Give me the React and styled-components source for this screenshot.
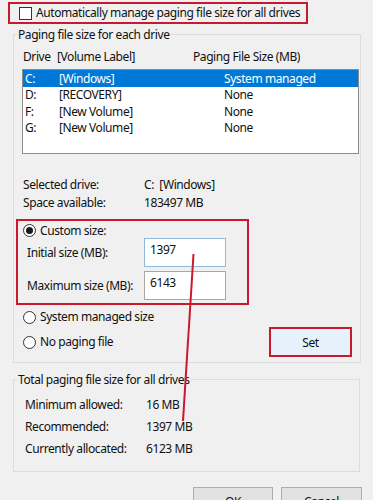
import styled, { createGlobalStyle } from 'styled-components';

const GlobalStyle = createGlobalStyle`
  html, body {
    margin: 0;
    padding: 0;
    background: #f0f0f0;
  }
  body {
    font-family: 'Noto Sans', 'Open Sans', sans-serif;
    font-size: 12px;
    letter-spacing: -0.42px;
    color: #111;
  }
`;

const RED = '#c8192e';

const Dialog = styled.div`
  position: relative;
  width: 373px;
  height: 500px;
  overflow: hidden;
  padding-top: 2px;
  box-sizing: border-box;
`;

const AutoBox = styled.label`
  display: flex;
  align-items: center;
  gap: 4px;
  box-sizing: border-box;
  width: 300px;
  height: 22px;
  margin-left: 8px;
  padding-left: 9px;
  border: 2px solid ${RED};
  line-height: 16px;
  white-space: nowrap;
`;

const Checkbox = styled.span`
  width: 13px;
  height: 13px;
  box-sizing: border-box;
  border: 1px solid #333;
  background: #fff;
  flex: none;
`;

const Group = styled.fieldset`
  box-sizing: border-box;
  min-width: 0;
  width: ${p => p.$width}px;
  margin: ${p => p.$top}px 0 0 13px;
  padding: 6px 0 ${p => p.$bottom}px 0;
  border: 1px solid #dcdcdc;
`;

const Legend = styled.legend`
  margin-left: 3px;
  padding: 2px 1px 0;
  line-height: 16px;
`;

const Columns = styled.div`
  display: grid;
  grid-template-columns: ${p => p.$cols};
  line-height: 16px;
  padding-left: ${p => p.$pad}px;
  white-space: nowrap;
`;

const ListBox = styled.div`
  box-sizing: border-box;
  width: 337px;
  height: 85px;
  margin: 4px 0 0 8px;
  border: 1px solid #8c8c8c;
  background: #fff;
`;

const ListRow = styled(Columns)`
  height: ${p => (p.$selected ? 17 : 16.5)}px;
  line-height: ${p => (p.$selected ? 17 : 16.5)}px;
  background: ${p => (p.$selected ? '#0078d7' : 'transparent')};
  color: ${p => (p.$selected ? '#fff' : '#111')};
`;

const InfoList = styled.div`
  margin-top: ${p => p.$top}px;
  padding-left: ${p => p.$pad}px;
`;

const InfoRow = styled.div`
  display: grid;
  grid-template-columns: ${p => p.$label}px auto;
  line-height: ${p => p.$height}px;
  white-space: nowrap;
`;

const CustomBox = styled.div`
  box-sizing: border-box;
  width: 233px;
  height: 86px;
  margin: 7px 0 0 2px;
  padding: 2px 0 0 0;
  border: 2px solid ${RED};
`;

const RadioRow = styled.label`
  display: flex;
  align-items: center;
  gap: 4px;
  height: ${p => p.$height}px;
  padding-left: ${p => p.$pad}px;
  line-height: 16px;
  white-space: nowrap;
`;

const Radio = styled.span`
  position: relative;
  width: 13px;
  height: 13px;
  box-sizing: border-box;
  border: 1px solid #333;
  border-radius: 50%;
  background: #fff;
  flex: none;

  &::after {
    content: '';
    display: ${p => (p.$checked ? 'block' : 'none')};
    position: absolute;
    left: 2px;
    top: 2px;
    width: 7px;
    height: 7px;
    border-radius: 50%;
    background: #1a1a1a;
  }
`;

const SizeGrid = styled.div`
  display: grid;
  grid-template-columns: 117px 82px;
  row-gap: 4px;
  align-items: center;
  padding-left: 9px;
  white-space: nowrap;
`;

const SizeInput = styled.div`
  box-sizing: border-box;
  height: 29px;
  padding: 3px 0 0 5px;
  border: 1px solid ${p => (p.$focused ? '#8fb9d8' : '#a8a8a8')};
  background: #fff;
  line-height: 16px;
`;

const LowerRow = styled.div`
  display: flex;
  justify-content: space-between;
  margin-top: 4px;
  padding-right: 8px;
`;

const RadioStack = styled.div`
  display: flex;
  flex-direction: column;
  gap: 9px;
`;

const SetButton = styled.button`
  box-sizing: border-box;
  width: 83px;
  height: 30px;
  margin-top: 18px;
  padding: 0;
  border: 2px solid ${RED};
  background: #e5f1fb;
  font: inherit;
  letter-spacing: inherit;
  color: #111;
`;

const Footer = styled.div`
  display: flex;
  justify-content: flex-end;
  gap: 8px;
  margin-top: 15px;
  padding-right: 11px;
`;

const DialogButton = styled.button`
  box-sizing: border-box;
  width: ${p => p.$width}px;
  height: 26px;
  padding: 4px 0 0;
  border: 1px solid #adadad;
  background: #e1e1e1;
  font: inherit;
  letter-spacing: inherit;
  color: #111;
  line-height: 16px;
`;

const Pointer = styled.svg`
  position: absolute;
  left: 0;
  top: 0;
  pointer-events: none;
`;

const drives = [
  { letter: 'C:', label: '[Windows]', size: 'System managed', selected: true },
  { letter: 'D:', label: '[RECOVERY]', size: 'None' },
  { letter: 'F:', label: '[New Volume]', size: 'None' },
  { letter: 'G:', label: '[New Volume]', size: 'None' },
];

const totals = [
  ['Minimum allowed:', '16 MB'],
  ['Recommended:', '1397 MB'],
  ['Currently allocated:', '6123 MB'],
];

export default function App() {
  return (
    <Dialog>
      <GlobalStyle />
      <AutoBox>
        <Checkbox />
        Automatically manage paging file size for all drives
      </AutoBox>

      <Group $width={348} $top={1} $bottom={5}>
        <Legend>Paging file size for each drive</Legend>
        <Columns $cols="34px 136px auto" $pad={9}>
          <span>Drive</span>
          <span>[Volume Label]</span>
          <span>Paging File Size (MB)</span>
        </Columns>
        <ListBox>
          {drives.map(d => (
            <ListRow key={d.letter} $cols="34px 165px auto" $pad={2} $selected={d.selected}>
              <span>{d.letter}</span>
              <span>{d.label}</span>
              <span>{d.size}</span>
            </ListRow>
          ))}
        </ListBox>

        <InfoList $top={22} $pad={9}>
          <InfoRow $label={121} $height={18}>
            <span>Selected drive:</span>
            <span>C:&nbsp; [Windows]</span>
          </InfoRow>
          <InfoRow $label={121} $height={18}>
            <span>Space available:</span>
            <span>183497 MB</span>
          </InfoRow>
        </InfoList>

        <CustomBox>
          <RadioRow $height={15} $pad={5}>
            <Radio $checked />
            Custom size:
          </RadioRow>
          <SizeGrid>
            <span>Initial size (MB):</span>
            <SizeInput $focused>1397</SizeInput>
            <span>Maximum size (MB):</span>
            <SizeInput>6143</SizeInput>
          </SizeGrid>
        </CustomBox>

        <LowerRow>
          <RadioStack>
            <RadioRow $height={16} $pad={9}>
              <Radio />
              System managed size
            </RadioRow>
            <RadioRow $height={16} $pad={9}>
              <Radio />
              No paging file
            </RadioRow>
          </RadioStack>
          <SetButton>Set</SetButton>
        </LowerRow>
      </Group>

      <Group $width={347} $top={7} $bottom={11}>
        <Legend>Total paging file size for all drives</Legend>
        <InfoList $top={0} $pad={11}>
          {totals.map(([label, value]) => (
            <InfoRow key={label} $label={121} $height={22}>
              <span>{label}</span>
              <span>{value}</span>
            </InfoRow>
          ))}
        </InfoList>
      </Group>

      <Footer>
        <DialogButton $width={80}>OK</DialogButton>
        <DialogButton $width={81}>Cancel</DialogButton>
      </Footer>

      <Pointer width="373" height="500">
        <line x1="193.5" y1="254" x2="183" y2="421" stroke={RED} strokeWidth="2" />
      </Pointer>
    </Dialog>
  );
}
